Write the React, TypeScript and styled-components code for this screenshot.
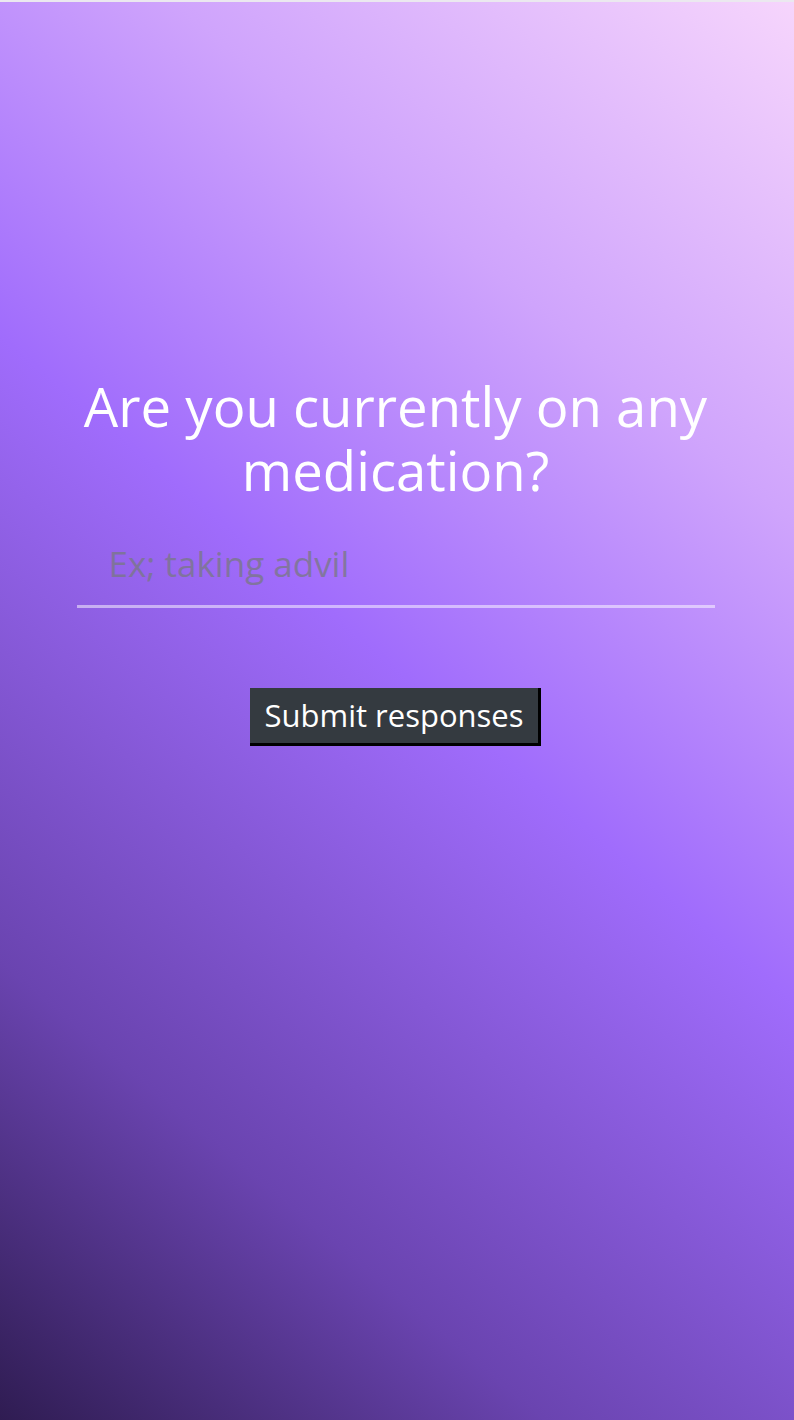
import React from "react";
import styled, { createGlobalStyle } from "styled-components";

const Global = createGlobalStyle`
  html, body { margin: 0; padding: 0; background: #ebe8ef; }
  #root { min-height: 1420px; }
  * { box-sizing: border-box; }
`;

const Page = styled.div`
  margin-top: 2px;
  height: 1418px;
  background: linear-gradient(40deg, #2f1c52 0%, #6a44b0 22%, #a06cfc 52%, #cfa4fc 75%, #f6d5fc 100%);
  font-family: "Open Sans", "Noto Sans", sans-serif;
  display: flex;
  flex-direction: column;
  align-items: center;
  padding: 372px 3px 0 0;
`;

const Question = styled.h1`
  margin: 0;
  width: 660px;
  text-align: center;
  color: #ffffff;
  font-weight: 400;
  font-size: 54.5px;
  line-height: 64px;
`;

const Field = styled.input`
  margin-top: 34px;
  width: 638px;
  height: 72px;
  padding: 0 0 14px 32px;
  background: transparent;
  border: none;
  border-bottom: 3px solid rgba(255, 255, 255, 0.5);
  font-family: "Open Sans", "Noto Sans", sans-serif;
  font-size: 35px;
  color: #ffffff;
  outline: none;
  &::placeholder { color: rgba(120, 120, 130, 0.75); }
`;

const Submit = styled.button`
  margin-top: 80px;
  width: 291px;
  height: 58px;
  padding: 0 0 2px;
  background: #343a40;
  color: #ffffff;
  border: none;
  border-right: 3px solid #000;
  border-bottom: 3px solid #000;
  font-family: "Open Sans", "Noto Sans", sans-serif;
  font-size: 31px;
  cursor: pointer;
`;

export default function App() {
  return (
    <>
      <Global />
      <Page>
        <Question>Are you currently on any medication?</Question>
        <Field placeholder="Ex; taking advil" />
        <Submit>Submit responses</Submit>
      </Page>
    </>
  );
}
